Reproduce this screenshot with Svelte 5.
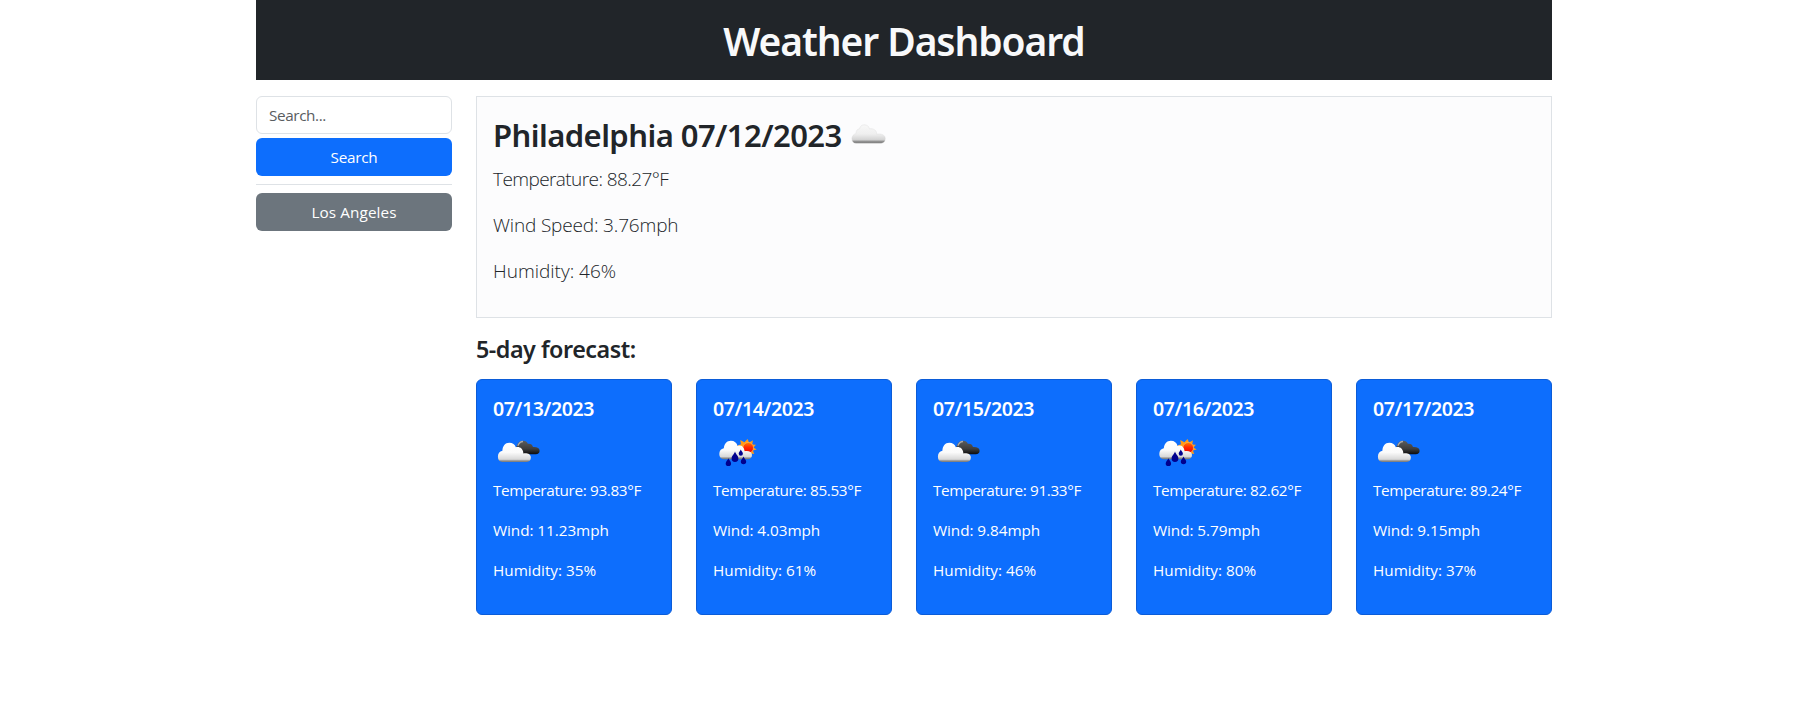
<script>
  const forecast = [
    { date: '07/13/2023', icon: 'clouds', temp: '93.83', wind: '11.23', humidity: 35 },
    { date: '07/14/2023', icon: 'rain', temp: '85.53', wind: '4.03', humidity: 61 },
    { date: '07/15/2023', icon: 'clouds', temp: '91.33', wind: '9.84', humidity: 46 },
    { date: '07/16/2023', icon: 'rain', temp: '82.62', wind: '5.79', humidity: 80 },
    { date: '07/17/2023', icon: 'clouds', temp: '89.24', wind: '9.15', humidity: 37 }
  ];
  const history = ['Los Angeles'];
</script>

<svg class="defs" width="0" height="0" aria-hidden="true">
  <defs>
    <linearGradient id="soft" x1="0" y1="0" x2="0" y2="1">
      <stop offset="0" stop-color="#f8f8f8" />
      <stop offset=".5" stop-color="#efefef" />
      <stop offset=".82" stop-color="#d2d2d2" />
      <stop offset=".88" stop-color="#999" />
      <stop offset="1" stop-color="#707070" />
    </linearGradient>
    <linearGradient id="white" x1="0" y1="0" x2="0" y2="1">
      <stop offset="0" stop-color="#fff" />
      <stop offset=".5" stop-color="#fbfbfb" />
      <stop offset=".86" stop-color="#d8d8d8" />
      <stop offset=".94" stop-color="#909090" />
      <stop offset="1" stop-color="#777" />
    </linearGradient>
    <linearGradient id="dark" x1="0" y1="0" x2="0" y2="1">
      <stop offset="0" stop-color="#5c5c5c" />
      <stop offset=".6" stop-color="#3d3d3d" />
      <stop offset="1" stop-color="#0c0c0c" />
    </linearGradient>
    <linearGradient id="sun" x1="0" y1="0" x2="0" y2="1">
      <stop offset="0" stop-color="#ff7a00" />
      <stop offset=".45" stop-color="#ff2a00" />
      <stop offset="1" stop-color="#e80000" />
    </linearGradient>
  </defs>
</svg>

<div class="container">
  <header><h1>Weather Dashboard</h1></header>
  <div class="body">
    <aside>
      <input type="text" placeholder="Search..." />
      <button class="primary">Search</button>
      <hr />
      {#each history as city}
        <button class="secondary">{city}</button>
      {/each}
    </aside>
    <main>
      <section class="today">
        <h2>
          <span>Philadelphia 07/12/2023</span>
          <svg width="36" height="22" viewBox="0 0 36 22">
            <path d="M5 19.300C2.300 19.300.9 17.500.9 14.800c0-2.800 1.500-4.500 4-5.100C5 6.600 6.300 5.200 8.500 4.700 9.200 2 11.100.8 13.300.8c2.900 0 4.600 1.600 5.200 4 3.600-.4 6.800.6 7.300 5.400 4-.9 8.500.5 8.500 4.400 0 2.900-1.500 4.700-4.100 4.700Z" fill="url(#soft)" stroke="#d9d9d9" stroke-width=".4" />
          </svg>
        </h2>
        <p class="t">Temperature: 88.27°F</p>
        <p class="w">Wind Speed: 3.76mph</p>
        <p>Humidity: 46%</p>
      </section>
      <h3>5-day forecast:</h3>
      <div class="cards">
        {#each forecast as day}
          <article>
            <h4>{day.date}</h4>
            <svg width="50" height="50" viewBox="0 0 50 50">
              {#if day.icon === 'clouds'}
                <path d="M23.500 18.500C25 14.500 27 12.800 29.800 12.800c2.800 0 4.300 1.300 5 3 2.700-.4 4.600.8 5.200 3.300C43.800 18.800 46.600 20 46.600 22.700c0 2.200-1.500 3.500-3.800 3.500H30Z" fill="url(#dark)" />
                <path d="M24.800 17.800C26 14.700 27.500 13.500 30 13.500" fill="none" stroke="#aaa" stroke-width="1.300" />
                <path d="M9.300 34C6.400 34 4.900 31.900 4.900 28.800c0-3.200 1.500-5.400 4.500-6C9.600 18 12 14.700 16.300 14.700c3.400 0 5.600 1.600 6.500 4.500 3.600-.9 7.200.9 7.600 6.200 4-.6 7.500.8 7.500 4.200 0 2.800-1.500 4.400-4.100 4.400Z" fill="url(#white)" />
              {:else}
                <path d="M34.500 11l1.600 3.500 3.800-2.200-.6 4.200 3.600.3-2.300 2.600 3.100 2.200-3.800.9 1.300 3.500-4.200-.8-2.300 2.800-2.400-2.800-5 0 0-5.500-2.800-2.100 3.500-1.300-.8-4.200 4.200 2.100Z" fill="#ff9c16" />
                <circle cx="35.200" cy="19.800" r="5.300" fill="url(#sun)" stroke="#ffbd61" stroke-width=".6" />
                <path d="M11 31.200C7.900 31.200 6.300 29 6.300 25.800c0-3 1.800-5.100 4.500-5.600C11.400 15.500 14 12.800 17.800 12.800c3.600 0 6 2 6.800 5.300 3.200-1.500 6.500.4 7 5.200 4-.8 7.400.6 7.400 3.700 0 2.700-1.600 4.200-4.200 4.200Z" fill="url(#white)" />
                <g fill="#00008e">
                  <path d="M22 23.500c.7 2.800 3.400 4 3.400 7a3.400 3.400 0 0 1-6.800 0C18.600 27.500 21.300 26.300 22 23.500Z" />
                  <path d="M15.400 30.200c.5 2 2.700 3 2.700 5.200a2.700 2.700 0 0 1-5.400 0c0-2.200 2.200-3.200 2.700-5.200Z" />
                  <path d="M27.800 21.500c.4 1.600 2.100 2.400 2.100 4.200a2.100 2.100 0 0 1-4.200 0c0-1.800 1.700-2.600 2.100-4.200Z" />
                  <path d="M30.500 28.400c.5 2 2.700 3 2.700 5.200a2.700 2.700 0 0 1-5.400 0c0-2.200 2.200-3.200 2.700-5.200Z" />
                </g>
              {/if}
            </svg>
            <p class="t">Temperature: {day.temp}°F</p>
            <p class="w">Wind: {day.wind}mph</p>
            <p>Humidity: {day.humidity}%</p>
          </article>
        {/each}
      </div>
    </main>
  </div>
</div>

<style>
  :global(body) { background: #fff; color: #212529; font-family: "Open Sans", "Noto Sans", sans-serif; }
  * { box-sizing: border-box; }
  h1, h2, h3, h4, p { margin: 0; }
  h1, h2, h3, h4 { font-family: "Noto Sans", sans-serif; font-weight: 600; }
  .defs { display: block; }
  .container { width: 1296px; margin-left: 256px; }
  header { height: 80px; padding-top: 17px; background: #212529; color: #f8f9fa; text-align: center; }
  h1 { font-size: 39px; line-height: 48px; letter-spacing: -1.09px; }
  .body { display: flex; gap: 24px; padding-top: 16px; }
  aside { width: 196px; display: flex; flex-direction: column; }
  input, button { width: 100%; height: 38px; border-radius: 6px; font: 15.3px/24px "Open Sans", sans-serif; }
  input { border: 1px solid #dee2e6; padding: 6px 12px; background: #fff; letter-spacing: -0.4px; margin-bottom: 4px; }
  input::placeholder { color: #595c5f; opacity: 1; }
  button { border: 0; padding: 7px 12px; color: #fff; }
  .primary { background: #0d6efd; letter-spacing: -0.25px; }
  .secondary { background: #6c757d; letter-spacing: 0.1px; }
  hr { width: 100%; height: 1px; border: 0; margin: 8px 0; background: #dee2e6; }
  main { flex: 1; }
  .today { height: 222px; padding: 16px; border: 1px solid #dee2e6; background: #fcfcfd; }
  h2 { display: flex; height: 42px; margin-bottom: 9px; padding-top: 3px; font-size: 31px; line-height: 38.4px; letter-spacing: -0.56px; }
  h2 span { width: 357.5px; white-space: nowrap; }
  h2 svg { margin-top: 8px; }
  .today p { margin-bottom: 16px; font-size: 19px; line-height: 30px; font-weight: 300; }
  .today .t { letter-spacing: -0.58px; }
  .today .w { letter-spacing: -0.16px; }
  h3 { padding: 17px 0 15px; font-size: 23.3px; line-height: 29px; letter-spacing: -0.48px; }
  .cards { display: grid; grid-template-columns: repeat(5, 196px); gap: 24px; }
  article { height: 236px; padding: 17px 16px 16px; border: 1px solid #0b5cd8; border-radius: 6px; background: #0d6efd; color: #fff; }
  h4 { margin-bottom: 7px; font-size: 19.5px; line-height: 24px; letter-spacing: -0.37px; }
  article svg { display: block; }
  article p { margin-bottom: 16px; font-size: 15.3px; line-height: 24px; }
  article .t { letter-spacing: -0.35px; }
  article .w { letter-spacing: -0.06px; }
</style>
